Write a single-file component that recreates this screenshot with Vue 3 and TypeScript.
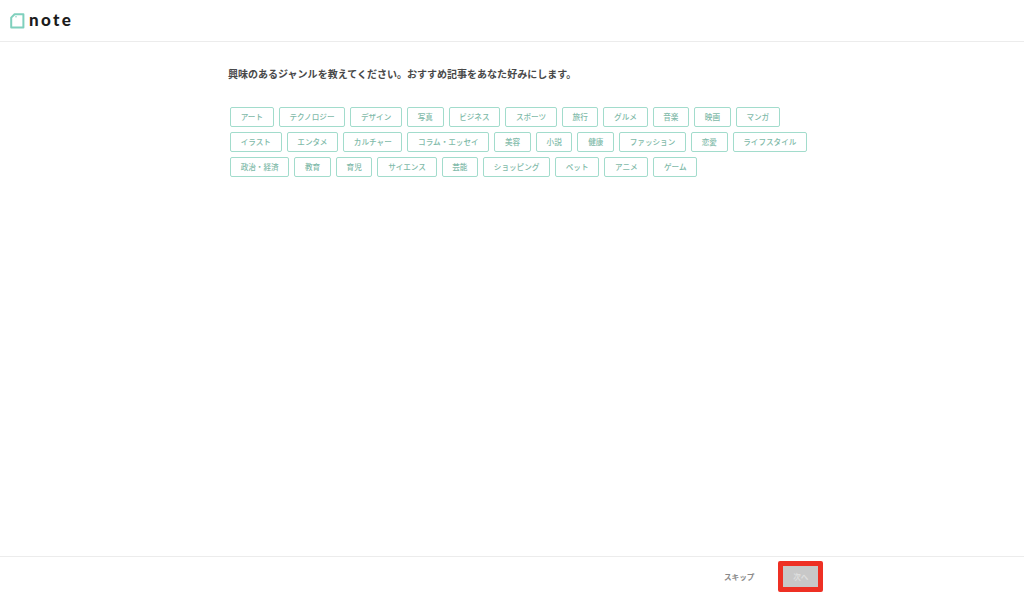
<script setup lang="ts">
const rows: string[] = [
  'アート','テクノロジー','デザイン','写真','ビジネス','スポーツ','旅行','グルメ','音楽','映画','マンガ',
  'イラスト','エンタメ','カルチャー','コラム・エッセイ','美容','小説','健康','ファッション','恋愛','ライフスタイル',
  '政治・経済','教育','育児','サイエンス','芸能','ショッピング','ペット','アニメ','ゲーム'
]
</script>

<template>
  <div class="page">
    <header class="head">
      <svg class="mark" width="15" height="16" viewBox="0 0 15 16" aria-hidden="true">
        <path d="M4.6 1.2H13.4V14.6H1.2V4.6Z" fill="#fff" stroke="#7fd0bd" stroke-width="2" stroke-linejoin="round" />
        <path d="M5.2 3.8H6.8" stroke="#7fd0bd" stroke-width="1" />
      </svg>
      <span class="word">note</span>
    </header>
    <main class="body">
      <h1 class="title">興味のあるジャンルを教えてください。おすすめ記事をあなた好みにします。</h1>
      <ul class="chips">
        <li v-for="c in rows" :key="c" class="chip">{{ c }}</li>
      </ul>
    </main>
    <footer class="foot">
      <span class="skip">スキップ</span>
      <span class="next-wrap">
        <button class="next" type="button">次へ</button>
      </span>
    </footer>
  </div>
</template>

<style>
html, body { margin: 0; background: #fff; }
</style>

<style scoped>
.page {
  width: 1024px;
  height: 601px;
  display: flex;
  flex-direction: column;
  font-family: "Noto Sans CJK JP", "Noto Sans", sans-serif;
  overflow: hidden;
  background: #fff;
}
.head {
  height: 41px;
  flex: none;
  border-bottom: 1px solid #ececec;
  display: flex;
  align-items: center;
  padding-left: 10px;
  gap: 4px;
}
.mark { display: block; }
.word {
  font-family: Lato, "Liberation Sans", sans-serif;
  font-weight: 900;
  font-size: 17px;
  letter-spacing: 2.4px;
  color: #1c1c1c;
  line-height: 1;
  position: relative;
  top: -1px;
}
.body {
  flex: 1;
  padding-left: 228px;
  width: 596px;
}
.title {
  margin: 24px 0 0;
  font-size: 10.03px;
  line-height: 15px;
  font-weight: 700;
  color: #484848;
  white-space: nowrap;
}
.chips {
  list-style: none;
  margin: 26px 0 0;
  padding: 0 0 0 2px;
  display: flex;
  flex-wrap: wrap;
  gap: 5px 5px;
}
.chip {
  box-sizing: border-box;
  height: 20px;
  padding: 0 9.7px;
  border: 1px solid #a2dccc;
  border-radius: 2px;
  font-size: 7.6px;
  line-height: 18px;
  font-weight: 500;
  color: #7fbaa9;
  white-space: nowrap;
  background: #fff;
}
.foot {
  height: 45px;
  flex: none;
  border-top: 1px solid #ececec;
  display: flex;
  align-items: center;
  padding-left: 724px;
  padding-bottom: 5px;
  box-sizing: border-box;
  gap: 24px;
}
.skip {
  font-size: 7.6px;
  font-weight: 700;
  color: #8a8a8a;
}
.next-wrap {
  display: block;
  border: 5px solid #ee3024;
  border-radius: 2px;
}
.next {
  display: block;
  width: 35px;
  height: 21px;
  border: 0;
  padding: 0;
  background: #c8c8c8;
  color: #dedede;
  font-family: inherit;
  font-size: 7.6px;
  font-weight: 700;
}
</style>
